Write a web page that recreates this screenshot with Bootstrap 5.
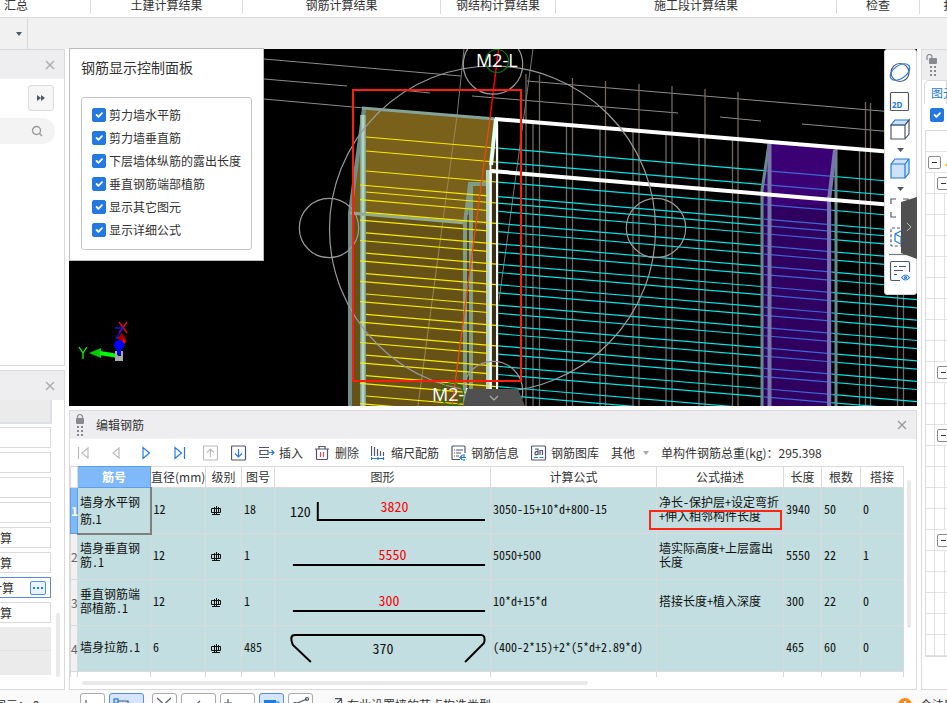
<!DOCTYPE html>
<html lang="zh-CN">
<head>
<meta charset="utf-8">
<meta name="viewport" content="width=device-width, initial-scale=1">
<title>编辑钢筋</title>
<link href="https://cdn.jsdelivr.net/npm/bootstrap@5.3.0/dist/css/bootstrap.min.css" rel="stylesheet">
<style>
:root { --line:#dadadc; --head:#eeeef1; --blue:#2479e0; --ink:#333; }
body { font-family:"Noto Sans CJK SC",sans-serif; font-size:12px; line-height:18px; color:var(--ink); background:#fff; }
button { color:inherit; }
svg { display:block; flex:none; }
.ico { fill:none; stroke:#50566b; stroke-width:1.2; }
.plain { border:0; background:none; padding:0; }
.ribbon { height:18px; border-bottom:1px solid var(--line); }
.ribbon a { color:var(--ink); line-height:18px; height:14px; border-right:1px solid var(--line); text-decoration:none; white-space:nowrap; flex:none; display:flex; justify-content:center; }
.ribbon span { margin-top:-4px; }
.w-a { width:91px; } .w-b { width:152px; } .w-c { width:198px; } .w-d { width:115px; } .w-e { width:281px; } .w-f { width:83px; } .w-g { width:72px; }
.subbar { height:31px; background:#f1f1f1; }
.subbar > div { width:28px; border-right:1px solid var(--line); padding-left:11px; }
.caret { width:0; height:0; border:3px solid transparent; border-top:4px solid #50566b; border-bottom:0; display:block; }
.side-left { width:65px; }
.pane { border:1px solid var(--line); }
.pane-head { background:var(--head); height:29px; }
.edit .pane-head { height:28px; padding:0 8px 0 6px; }
.upper { height:317px; }
.more { width:26px; height:26px; background:#f6f6f7; border:1px solid #dcdce0; border-radius:3px; }
.more-row { padding:6px 10px 7px 0; }
.search { height:26px; width:55px; background:#f3f3f3; border-radius:0 13px 13px 0; padding-right:12px; }
.prop { height:21px; width:51px; border:1px solid var(--line); border-left:0; margin-bottom:4px; }
.prop > span { display:flex; justify-content:flex-end; width:12px; overflow:hidden; white-space:nowrap; }
.prop.on { border-color:#5b8adf; }
.prop.on > span { width:14px; }
.dots { width:16px; height:14px; border:1px solid #4a95e6; border-radius:2px; background:#e9f2fd; gap:2px; }
.dots i { width:2px; height:2px; background:var(--blue); }
.gray { background:#ebebeb; height:24px; width:52px; }
.gray.first { margin-bottom:3px; }
.gray.rest { width:51px; }
.thumb { background:#e9e9e9; border-radius:3px; }
.lthumb { width:4px; height:64px; right:4px; bottom:12px; }
.view { background:#000; min-height:0; }
.panel { left:0; top:-1px; width:195px; height:213px; background:#fff; border:1px solid #bcbcbc; padding:8px 11px; }
.panel h2 { font-size:14px; line-height:20px; margin:0 0 20px; font-weight:400; }
.group { border:1px solid #c6c6c6; border-radius:3px; padding:5px 10px 8px; }
.group label { height:23px; gap:3px; }
.tick { width:14px; height:14px; margin:0; border-radius:2px !important; flex:none; }
.tick:checked { background-color:var(--blue); border-color:var(--blue); }
.tools { right:0; top:0; width:33px; height:246px; background:#fff; border:1px solid #d4d4d4; border-radius:3px; }
.handle-r { right:0; top:148px; }
.handle-b { left:calc(50% - 30px); bottom:0; }
.edit { height:280px; }
.toolbar { height:27px; padding-left:5px; gap:12px; }
.toolbar button { gap:4px; white-space:nowrap; }
.nav-set { gap:16px; margin-right:4px; }
.sheet { padding-right:12px; }
.rebar { table-layout:fixed; color:#111; }
.rebar > :not(caption) > * > * { padding:0 2px 3px; border:1px solid var(--line); box-shadow:none; background:#c2dee0; vertical-align:middle; line-height:14px; font-family:"Noto Sans Mono CJK SC","Noto Sans CJK SC",monospace; color:#111; }
.rebar > thead > tr > th { background:#fff; height:21px; padding:0; text-align:center; font-weight:400; color:var(--ink); white-space:nowrap; font-family:"Noto Sans CJK SC",sans-serif; }
.rebar > tbody > tr { height:46px; }
.rebar > tbody > tr > th { background:#f1f1f1; padding:0; font:12px/18px "Noto Sans CJK SC",sans-serif; color:#666; text-align:center; }
.rebar > thead > tr > th.on, .rebar > tbody > tr > th.on { background:#80b9fa; color:#fff; font-weight:700; border-color:#5e9fe8; }
.rebar > tbody > tr > td.cur { font-family:"Noto Sans CJK SC",sans-serif; line-height:17px; padding-bottom:0; border-right:2px solid #7f7f7f; border-bottom:2px solid #7f7f7f; }
.rebar > tbody > tr > td.draw { padding:0; }
.rebar > tbody > tr > td.grade { padding:0 0 0 5px; }
.rebar > tfoot > tr > td { background:#fff; height:5px; padding:0; border-bottom:0; }
.draw svg { width:100%; height:44px; fill:none; stroke:#000; stroke-width:2; }
.draw text { stroke:none; fill:#111; font:14px "Noto Sans Mono CJK SC","Noto Sans CJK SC",monospace; }
.draw text.len { fill:#f00; }
.callout { left:-8px; top:22px; width:133px; height:20px; border:2px solid #ff2616; }
.vthumb { width:4px; height:148px; right:5px; top:69px; }
.hthumb { height:4px; width:506px; margin:4px 0 0 12px; }
.side-right { width:26px; overflow:hidden; }
.side-right .pane-head { height:30px; }
.tab { height:24px; border:1px solid var(--line); border-bottom:0; border-radius:5px 0 0 0; margin-left:2px; padding-left:6px; color:var(--blue); white-space:nowrap; }
.tree { margin-left:3px; border:1px solid var(--line); border-right:0; width:60px; }
.tree > div { height:21px; border-bottom:1px solid #e2e2e2; }
.tree .c1 { width:9px; border-right:1px solid #e2e2e2; }
.tree .c2 { width:10px; border-right:1px solid #e2e2e2; }
.node { width:13px; height:13px; border:1px solid #8a8a8a; border-radius:2px; background:#fff; margin-left:2px; }
.node i { width:5px; height:1px; background:#333; }
.status { height:13px; background:#fafafa; }
.status > * { flex:none; }
.status button { height:20px; border:1px solid #aaa; border-radius:3px; background:#fff; margin-top:3px; padding:0; }
.status button.lit { background:#d5e6fc; border-color:#5b8ed8; }
.n1 { width:25px; } .n2 { width:35px; }
.status .txt { padding-top:6px; white-space:nowrap; }
.status .pos { width:76px; text-indent:-6px; }
.status .msg { width:31px; }
</style>
<script src="https://cdn.jsdelivr.net/npm/bootstrap@5.3.0/dist/js/bootstrap.bundle.min.js"></script>
</head>
<body class="vh-100 d-flex flex-column overflow-hidden">
<nav class="ribbon d-flex flex-shrink-0 overflow-hidden" aria-label="结果">
  <a href="#" class="w-a justify-content-start ps-1"><span>汇总</span></a><a href="#" class="w-b"><span>土建计算结果</span></a><a href="#" class="w-c"><span>钢筋计算结果</span></a><a href="#" class="w-d"><span>钢结构计算结果</span></a><a href="#" class="w-e"><span>施工段计算结果</span></a><a href="#" class="w-f"><span>检查</span></a><a href="#" class="w-g"><span>报表</span></a>
</nav>
<div class="subbar d-flex flex-shrink-0"><div class="d-flex align-items-center justify-content-center"><span class="caret"></span></div></div>

<main class="d-flex flex-grow-1 gap-1" style="min-height:0">
  <aside class="side-left d-flex flex-column flex-shrink-0">
    <section class="pane upper border-start-0">
      <div class="pane-head d-flex align-items-center justify-content-end pe-2">
        <button class="plain" aria-label="关闭"><svg width="12" height="12" stroke="#aaa" stroke-width="1.4"><path d="M2 2l8 8M10 2l-8 8"/></svg></button>
      </div>
      <div class="more-row d-flex justify-content-end"><button class="more d-flex align-items-center justify-content-center p-0" aria-label="展开"><svg width="10" height="8" fill="#50566b"><path d="M1 1l4 3-4 3zM5 1l4 3-4 3z"/></svg></button></div>
      <div class="search d-flex align-items-center justify-content-end"><svg width="12" height="12" fill="none" stroke="#999" stroke-width="1.4"><circle cx="5.5" cy="5.5" r="4"/><path d="M8.500 8.500l2.500 2.500"/></svg></div>
    </section>
    <section class="pane border-start-0 mt-1 flex-grow-1 position-relative overflow-hidden">
      <div class="pane-head d-flex align-items-center justify-content-end pe-2">
        <button class="plain" aria-label="关闭"><svg width="12" height="12" stroke="#aaa" stroke-width="1.4"><path d="M2 2l8 8M10 2l-8 8"/></svg></button>
      </div>
      <div class="gray first border-end border-bottom border-2"></div>
      <div class="prop"></div><div class="prop"></div><div class="prop"></div><div class="prop"></div>
      <div class="prop d-flex align-items-center"><span>计算</span></div>
      <div class="prop d-flex align-items-center"><span>计算</span></div>
      <div class="prop on d-flex align-items-center justify-content-between pe-1"><span>计算</span><button class="dots d-flex align-items-center justify-content-center p-0" aria-label="更多"><i></i><i></i><i></i></button></div>
      <div class="prop d-flex align-items-center mb-0"><span>计算</span></div>
      <div class="gray rest mt-1 border-bottom"></div><div class="gray rest"></div>
      <div class="thumb lthumb position-absolute"></div>
    </section>
  </aside>

  <div class="d-flex flex-column flex-grow-1 gap-1" style="min-width:0">
    <section class="view flex-grow-1 position-relative">
      <svg id="scene" class="w-100 h-100" viewBox="69 49 848 357" preserveAspectRatio="xMidYMid slice" fill="none">
        <path d="M264 59L461 76M264 79L347 86M401 90L430 93M264 99L364 108M472 96L678 113M720 117L761 121M802 124L917 134M527 81L917 114" stroke="#8c8c8c"/>
        <g id="posts" stroke="#74675f" stroke-width="1.300"></g>
        <path d="M364 108L495 119L489 175V406H349V213Z" fill="#7a611b"/>
        <path d="M349 213L466 223L489 225V406H349Z" fill="#665217"/>
        <path d="M464 49L457 116M533 49L493 345" stroke="#777"/>
        <path d="M457 116L418 406" stroke="#9c8650"/>
        <path d="M491 172V406H499V120Z" fill="#3a3018"/>
        <path d="M364 108L350 213V406" stroke="#6f8e8a" stroke-width="4"/>
        <path d="M363 115V406" stroke="#7da08f" stroke-width="6"/><path d="M363 115V406" stroke="#b4d4c3" stroke-width="3"/>
        <path d="M362 108L496 119" stroke="#84a49b" stroke-width="3"/>
        <path d="M350 213L466 223" stroke="#91a98c" stroke-width="3"/>
        <path d="M487 184H470L465 223V406M471 184V406" stroke="#809b83" stroke-width="4"/>
        <path d="M468 215V406" stroke="#443714"/>
        <path d="M489 170V406" stroke="#b7d2c6" stroke-width="6"/>
        <g id="bars"></g>
        <path d="M769 142L835 148L828 198V406H762V190Z" fill="#3b0073"/>
        <path d="M764 205H832V406H764Z" fill="#300061"/>
        <g id="blueBars"></g>
        <path d="M769 144L762 190V406M836 148V406" stroke="#668b8d" stroke-width="3"/>
        <path d="M769.500 144V406M835 150L829 200V406" stroke="#7776a9" stroke-width="4"/>
        <path d="M770 142L835 148" stroke="#b070ff" stroke-width="2"/>
        <path d="M495 119L917 154M491 171L917 207" stroke="#fff" stroke-width="4"/>
        <path d="M496 119L491 165" stroke="#e2fff7" stroke-width="4"/>
        <path d="M490.500 165V406M497 119V406" stroke="#fff" stroke-width="2"/>
        <path d="M498.500 49L490 118" stroke="#f00" stroke-width="1.500"/><path d="M490 118L452 406" stroke="#ec4a12" stroke-width="1.300"/>
        <g stroke="#999" stroke-width="1.200"><circle cx="492.500" cy="229" r="163"/><circle cx="493" cy="64.500" r="29.700"/><circle cx="329" cy="228" r="29.700"/><circle cx="656" cy="228" r="29.700"/><circle cx="493" cy="391" r="29.700"/></g>
        <g stroke="#087a08" stroke-width="1.200"><circle cx="497" cy="61" r="11.500"/><circle cx="452" cy="394" r="11.500"/></g>
        <g fill="#fff" font-family="Open Sans, sans-serif" font-size="18"><text x="476" y="67">M2-L</text><text x="432" y="401">M2-L</text></g>
        <rect x="353" y="90" width="168" height="291" stroke="#ff1d0e" stroke-width="2"/>
        <g stroke-width="1.300">
          <path d="M79 347l4 6v6m0-6l4-6" stroke="#0f0"/><path d="M119 322l8 11m0-11l-8 11" stroke="#f00"/><path d="M115 328h8l-7 10h7" stroke="#11f"/>
          <path d="M89 353l12-5v10z" fill="#0c0"/><path d="M100 353l18 3" stroke="#0f0" stroke-width="4"/>
          <path d="M117 338l5-5 4 6-2 5z" fill="#a00000"/><path d="M123 338l3 3-3 5z" fill="#f00"/>
          <circle cx="119" cy="345" r="5" fill="#00f"/><path d="M119 346v9" stroke="#00f" stroke-width="4"/><path d="M115 351v10h8v-10h-2v5h-4v-5z" fill="#aaa"/>
        </g>
      </svg>

      <form class="panel position-absolute">
        <h2>钢筋显示控制面板</h2>
        <div class="group">
          <label class="d-flex align-items-center"><input type="checkbox" class="form-check-input tick" checked> 剪力墙水平筋</label>
          <label class="d-flex align-items-center"><input type="checkbox" class="form-check-input tick" checked> 剪力墙垂直筋</label>
          <label class="d-flex align-items-center"><input type="checkbox" class="form-check-input tick" checked> 下层墙体纵筋的露出长度</label>
          <label class="d-flex align-items-center"><input type="checkbox" class="form-check-input tick" checked> 垂直钢筋端部植筋</label>
          <label class="d-flex align-items-center"><input type="checkbox" class="form-check-input tick" checked> 显示其它图元</label>
          <label class="d-flex align-items-center"><input type="checkbox" class="form-check-input tick" checked> 显示详细公式</label>
        </div>
      </form>

      <div class="tools position-absolute" role="toolbar" aria-label="视图">
        <svg class="ico" width="31" height="244" viewBox="885 50 31 244">
          <circle cx="900" cy="72.500" r="9"/><ellipse cx="900" cy="72" rx="11" ry="6.500" transform="rotate(-35 900 72)" stroke="#2f80e8"/>
          <rect x="890.500" y="92.500" width="18" height="18" rx="1"/>
          <text x="892" y="108" fill="#2479e0" stroke="none" font-family="Noto Sans, sans-serif" font-weight="700" font-size="8">2D</text>
          <path d="M891 125l4-5h14l-4 5z" fill="#cfe2fa" stroke="#2479e0"/><path d="M891 125h14v14h-14zM905 125l4-5v14l-4 5"/>
          <path d="M897 148h7l-3.500 4z M897 187h7l-3.500 4z" fill="#50566b" stroke="none"/>
          <path d="M891 164l4-5h14v14l-4 5h-14z" fill="#cfe2fa" stroke="#2479e0"/><path d="M891 164h14v14M905 164l4-5" stroke="#2479e0"/>
          <path d="M891 204v-5h5M891 212v5h5M903 199h5v5"/>
          <rect x="891" y="228" width="18" height="18" rx="1" stroke-dasharray="3 2"/><path d="M895 234l6-3 6 3v7l-6 3-6-3zM895 234l6 3v7" stroke="#2479e0"/>
          <path d="M889 254.500h24" stroke="#777"/>
          <path d="M900 280.500h-8q-1.500 0-1.500-1.500v-16q0-1.500 1.500-1.500h16q1.500 0 1.500 1.500v9M894 266.500h3M899 266.500h7M894 270.500h9M894 274.500h3"/>
          <path d="M901.500 277.500q4-5 8 0q-4 5-8 0z" stroke="#2479e0"/><circle cx="905.500" cy="277.500" r="1" stroke="#2479e0"/>
        </svg>
      </div>
      <button class="plain handle-r position-absolute" aria-label="收起右侧"><svg width="16" height="62"><path d="M0 5L16 0V62L0 56z" fill="#505050"/><path d="M6 26l4 4-4 4" fill="none" stroke="#bbb"/></svg></button>
      <button class="plain handle-b position-absolute" aria-label="收起下方"><svg width="62" height="17"><path d="M4 0H55L62 17H0z" fill="#505050"/><path d="M27 7l4 4 4-4" fill="none" stroke="#aaa" stroke-width="1.200"/></svg></button>
    </section>

    <section class="pane edit flex-shrink-0 position-relative">
      <div class="pane-head d-flex align-items-center">
        <svg width="8" height="24" class="me-2" fill="#888a90"><path d="M1.500 6V4a2.500 2.500 0 015 0v2" fill="none" stroke="#888a90" stroke-width="1.200"/><rect y="5" width="8" height="6" rx="1"/><path d="M1 13h2v2h-2zM5 13h2v2h-2zM1 17h2v2h-2zM5 17h2v2h-2zM1 21h2v2h-2zM5 21h2v2h-2z"/></svg>
        <span class="ms-1">编辑钢筋</span>
        <button class="plain ms-auto" aria-label="关闭"><svg width="12" height="12" stroke="#999" stroke-width="1.300"><path d="M2 2l8 8M10 2l-8 8"/></svg></button>
      </div>
      <div class="toolbar d-flex align-items-center">
        <div class="nav-set d-flex">
          <button class="plain" aria-label="首行"><svg class="ico" width="16" height="16"><path d="M3.500 2v12M13 3v10L7 8z" stroke="#bbb"/></svg></button>
          <button class="plain" aria-label="上一行"><svg class="ico" width="16" height="16"><path d="M12 3v10L6 8z" stroke="#bbb"/></svg></button>
          <button class="plain" aria-label="下一行"><svg class="ico" width="16" height="16"><path d="M4 2.500v11L10.500 8z" stroke="#2479e0"/></svg></button>
          <button class="plain" aria-label="末行"><svg class="ico" width="16" height="16"><path d="M13.500 2v12M4 2.500v11L10.500 8z" stroke="#2479e0"/></svg></button>
        </div>
        <button class="plain" aria-label="上移"><svg class="ico" width="16" height="16"><rect x=".5" y="1" width="14" height="14" rx="1" stroke="#bbb"/><path d="M7.500 12V4M4 7.500L7.500 4 11 7.500" stroke="#bbb"/></svg></button>
        <button class="plain" aria-label="下移"><svg class="ico" width="16" height="16"><rect x=".5" y="1" width="14" height="14" rx="1"/><path d="M7.500 4v8M4 8.500L7.500 12 11 8.500" stroke="#2479e0"/></svg></button>
        <button class="plain d-flex align-items-center"><svg class="ico" width="16" height="16"><path d="M0 2.500h10M0 12.500h10M1 5.500h8v4H1z"/><path d="M10 7.500h5M12.500 5l2.500 2.500-2.500 2.500" stroke="#2479e0"/></svg>插入</button>
        <button class="plain d-flex align-items-center"><svg class="ico" width="16" height="16"><path d="M0 4h14M4 4V1.500h6V4M1.500 4v9.500q0 1 1 1h9q1 0 1-1V4"/><path d="M5.500 7v5M8.500 7v5" stroke="#e5484d"/></svg>删除</button>
        <button class="plain d-flex align-items-center"><svg class="ico" width="16" height="16"><path d="M.5 1v10M3.500 2v9M6.500 4v7M9.500 6v5M12.500 7v4"/><path d="M0 13.500h13M.5 12v3M7 12v3M12.500 12v3" stroke="#2479e0"/></svg>缩尺配筋</button>
        <button class="plain d-flex align-items-center"><svg class="ico" width="16" height="16"><path d="M9 14.500H2q-1 0-1-1V2q0-1 1-1h11q1 0 1 1v6M3 5h1M5 5h7M3 8h1M5 8h5M3 11h1M5 11h3"/><path d="M15 12.500h-6M11.500 10L9 12.500l2.500 2.500M13 9v3M13 14v2" stroke="#2479e0"/></svg>钢筋信息</button>
        <button class="plain d-flex align-items-center"><svg class="ico" width="16" height="16"><rect x=".5" y="1" width="14" height="14" rx="1"/><path d="M4 4h3v6M7 7q-3-1-3 1.500T7 9M9 10V5.500h2.500V10"/><path d="M3 12.500h4M8.500 12.500h4" stroke="#2479e0"/></svg>钢筋图库</button>
        <button class="plain d-flex align-items-center"><span class="me-1">其他</span><span class="caret opacity-50"></span></button>
        <span class="text-nowrap">单构件钢筋总重(kg)：295.398</span>
      </div>
      <div class="sheet">
        <table class="table m-0 rebar">
          <colgroup><col style="width:7px"><col style="width:73px"><col style="width:55px"><col style="width:36px"><col style="width:33px"><col><col style="width:166px"><col style="width:127px"><col style="width:38px"><col style="width:39px"><col style="width:43px"></colgroup>
          <thead><tr><th></th><th class="on">筋号</th><th>直径(mm)</th><th>级别</th><th>图号</th><th>图形</th><th>计算公式</th><th>公式描述</th><th>长度</th><th>根数</th><th>搭接</th></tr></thead>
          <tbody>
            <tr><th class="on">1</th><td class="cur">墙身水平钢筋.1</td><td>12</td><td class="grade"></td><td>18</td>
              <td class="draw"><svg viewBox="275 489 216 44"><path d="M318 502V520H486"/><text x="290" y="517">120</text><text class="len" x="381" y="512">3820</text></svg></td>
              <td>3050-15+10*d+800-15</td><td class="position-relative">净长-保护层+设定弯折+伸入相邻构件长度<div class="callout position-absolute"></div></td><td>3940</td><td>50</td><td>0</td></tr>
            <tr><th>2</th><td>墙身垂直钢筋.1</td><td>12</td><td class="grade"></td><td>1</td>
              <td class="draw"><svg viewBox="275 535 216 44"><path d="M293 565H486"/><text class="len" x="379" y="560">5550</text></svg></td>
              <td>5050+500</td><td>墙实际高度+上层露出长度</td><td>5550</td><td>22</td><td>1</td></tr>
            <tr><th>3</th><td>垂直钢筋端部植筋.1</td><td>12</td><td class="grade"></td><td>1</td>
              <td class="draw"><svg viewBox="275 581 216 44"><path d="M293 611H486"/><text class="len" x="379" y="606">300</text></svg></td>
              <td>10*d+15*d</td><td>搭接长度+植入深度</td><td>300</td><td>22</td><td>0</td></tr>
            <tr><th>4</th><td>墙身拉筋.1</td><td>6</td><td class="grade"></td><td>485</td>
              <td class="draw"><svg viewBox="275 627 216 44"><path d="M311 662L293 645Q289 635 295 635H482Q487 635 485 643L466 662"/><text x="373" y="654">370</text></svg></td>
              <td>(400-2*15)+2*(5*d+2.89*d)</td><td></td><td>465</td><td>60</td><td>0</td></tr>
          </tbody>
          <tfoot><tr><td></td><td></td><td></td><td></td><td></td><td></td><td></td><td></td><td></td><td></td><td></td></tr></tfoot>
        </table>
      </div>
      <div class="thumb hthumb"></div>
      <div class="thumb vthumb position-absolute"></div>
    </section>
  </div>

  <aside class="side-right pane border-end-0 flex-shrink-0">
    <div class="pane-head ps-1 pt-1"><svg width="14" height="24" fill="#888a90"><path d="M1 6V3a2.500 2.500 0 015 0v2" fill="none" stroke="#888a90" stroke-width="1.200"/><rect x="3" y="4" width="8" height="6" rx="1"/><path d="M4 12h2v2h-2zM8 12h2v2h-2zM4 16h2v2h-2zM8 16h2v2h-2zM4 20h2v2h-2zM8 20h2v2h-2z"/></svg></div>
    <div class="tab d-flex align-items-center">图元</div>
    <div class="ps-2 ms-0 pt-1 pb-2"><input type="checkbox" class="form-check-input tick d-block ms-0" aria-label="全选" checked></div>
    <div class="tree" id="tree"></div>
  </aside>
</main>

<footer class="status d-flex align-items-start gap-1 overflow-hidden">
  <span class="txt pos">图元：&nbsp;0</span>
  <button class="n1" aria-label="正交"><svg class="ico" width="22" height="16"><path d="M5 5v9h12"/></svg></button>
  <button class="n2 lit" aria-label="捕捉"><svg class="ico" width="33" height="16"><rect x="4" y="4" width="4" height="4" stroke="#2479e0"/><path d="M8 6h10v8M6 8v7"/></svg></button>
  <button class="n1 ms-1" aria-label="交点"><svg class="ico" width="22" height="16"><path d="M4 3l14 13M18 3L4 16"/></svg></button>
  <button class="n2" aria-label="垂点"><svg class="ico" width="33" height="16"><path d="M10 14l8-8"/></svg></button>
  <button class="n2" aria-label="中点"><svg class="ico" width="33" height="16"><path d="M7 4v8M3 8h8"/></svg></button>
  <button class="n1 lit" aria-label="图层"><svg width="22" height="16"><rect x="4" y="5" width="12" height="10" fill="#2479e0"/><path d="M16 7h3v8" fill="none" stroke="#2479e0"/></svg></button>
  <button class="n1" aria-label="线段"><svg class="ico" width="22" height="16"><path d="M6 9l12-5"/><circle cx="6" cy="9" r="1.500"/><circle cx="18" cy="4" r="1.500"/></svg></button>
  <svg class="ico ms-3 mt-2" width="10" height="12"><path d="M1 9L8 1M2 .6h6.500v7"/></svg>
  <span class="txt">在此设置墙的节点构造类型</span>
  <svg class="ms-auto mt-2" width="14" height="14"><circle cx="7" cy="7" r="7" fill="#f78b1f"/><path d="M7 3v6" stroke="#fff" stroke-width="2"/></svg>
  <span class="txt msg ps-1">今法口</span>
</footer>

<script>
// Straight bars share one slope; two series belong to the far and the near face.
const line = (x1, y1, x2, c, w) => `<path d="M${x1} ${y1}L${x2} ${(y1 + (x2 - x1) * 0.0845).toFixed(1)}" stroke="${c}" stroke-width="${w}"/>`;
const starts = [[366, 137], [366, 151], [366, 171], [360, 185]];
for (let i = 0; i < 11; i++) {
  starts.push([366, 192 + i * 20.4]);
  starts.push([360, 199.7 + i * 20.4]);
}
let bars = '', blue = '';
for (const [x, y] of starts) {
  bars += line(x, y, x === 366 ? 496 : 488, '#f4ec00', 1.2);
  const yr = y + (497 - x) * 0.0845;
  bars += line(498, yr, 917, '#00e4e4', 1.2);
  blue += line(764, yr + 266 * 0.0845, 833, '#3d66d8', 1.2);
}
document.getElementById('bars').innerHTML = bars;
document.getElementById('blueBars').innerHTML = blue;
const posts = [[526,74],[533,121],[539.5,75],[566.5,124],[572.5,78],[600,126],[605.5,81],[633,129],[639,84],[666,132],[672,86],[699,135],[705,89],[732.5,138],[738,92],[859.5,148],[865.5,102],[870.5,103],[897.5,150],[903.5,150]];
document.getElementById('posts').innerHTML = posts.map(([x, y]) => `<path d="M${x} ${y}V406"/>`).join('');

document.querySelectorAll('.grade').forEach(td => td.innerHTML =
  '<svg width="10" height="10" fill="none" stroke="#111"><path d="M.5 2.500h9v4h-9zM3.500 1v8M5.500 0v9M7.500 1v5M1 8.500h8"/></svg>');

const box = '<span class="node d-flex align-items-center justify-content-center flex-shrink-0"><i></i></span>';
const inner = [2, 11, 14, 19];
let rows = '';
for (let i = 0; i < 25; i++) {
  let h = '';
  if (i === 1) h = `${box}<span class="ms-1" style="color:#f0a020">▲</span>`;
  else if (inner.includes(i)) h = `<span class="c1 h-100"></span>${box}`;
  else if (i > 1) h = '<span class="c1 h-100"></span><span class="c2 h-100"></span>';
  rows += `<div class="d-flex align-items-center">${h}</div>`;
}
document.getElementById('tree').innerHTML = rows;
</script>
</body>
</html>
